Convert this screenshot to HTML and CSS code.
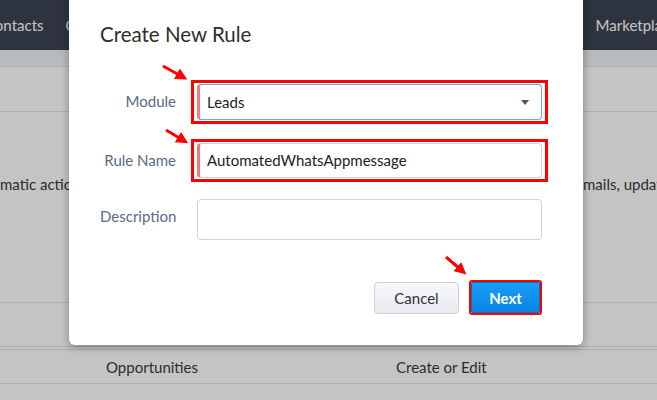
FILE: index.html
```html
<!DOCTYPE html>
<html>
<head>
<meta charset="utf-8">
<link rel="stylesheet" href="styles.css">
</head>
<body>
<div class="page">
  <nav class="topnav">
    <span class="nav-item first">Contacts</span>
    <span class="nav-item">Calls</span>
    <span class="nav-item right">Marketplace</span>
  </nav>
  <div class="subbar"></div>
  <div class="row row-head"></div>
  <div class="row row-desc">
    <span class="desc-left">matic actions are performed when the rule criteria are met</span>
    <span class="desc-right">mails, updating fields and more</span>
  </div>
  <div class="row row-a"></div>
  <div class="row row-b"></div>
  <div class="row row-data">
    <span class="cell">Opportunities</span>
    <span class="cell">Create or Edit</span>
  </div>
  <div class="row row-last"></div>
</div>

<div class="overlay"></div>

<div class="modal">
  <h2 class="modal-title">Create New Rule</h2>
  <div class="form">
    <div class="form-row">
      <label class="form-label">Module</label>
      <div class="field highlighted">
        <div class="select-box">
          <span class="select-value">Leads</span>
          <span class="caret"></span>
        </div>
      </div>
    </div>
    <div class="form-row">
      <label class="form-label">Rule Name</label>
      <div class="field highlighted">
        <div class="text-input">AutomatedWhatsAppmessage</div>
      </div>
    </div>
    <div class="form-row">
      <label class="form-label">Description</label>
      <div class="field">
        <div class="textarea"></div>
      </div>
    </div>
  </div>
  <div class="actions">
    <button class="btn btn-cancel">Cancel</button>
    <button class="btn btn-next">Next</button>
  </div>
</div>

<svg class="annotations" width="657" height="400" viewBox="0 0 657 400">
  <defs>
    <marker id="head" markerWidth="4" markerHeight="4" refX="1.2" refY="2" orient="auto" markerUnits="strokeWidth">
      <path d="M0,0 L4,2 L0,4 Z" fill="#ff0000"/>
    </marker>
  </defs>
  <line x1="163" y1="66" x2="180" y2="75.5" stroke="#ff0000" stroke-width="3" marker-end="url(#head)"/>
  <line x1="166" y1="130" x2="181" y2="139" stroke="#ff0000" stroke-width="3" marker-end="url(#head)"/>
  <line x1="446" y1="257" x2="460" y2="269" stroke="#ff0000" stroke-width="3" marker-end="url(#head)"/>
</svg>
</body>
</html>
```
FILE: styles.css
```css
html, body {
  margin: 0;
  padding: 0;
}
body {
  width: 657px;
  height: 400px;
  overflow: hidden;
  position: relative;
  font-family: Lato, "Open Sans", "Liberation Sans", sans-serif;
  background: #ffffff;
}

.page {
  width: 657px;
  overflow: hidden;
}

.topnav {
  height: 50px;
  background: #3d4452;
  display: flex;
  align-items: center;
  white-space: nowrap;
}
.nav-item {
  color: #ffffff;
  font-size: 15px;
  padding: 0 11px;
  flex-shrink: 0;
  line-height: 50px;
}
.nav-item.first {
  margin-left: -26px;
}
.nav-item.right {
  margin-left: auto;
  margin-right: -31px;
}

.subbar {
  height: 16px;
  background: linear-gradient(#edf0f3, #f4f5f7);
  border-bottom: 1px solid #e3e3e3;
}

.row {
  border-bottom: 1px solid #e3e3e3;
  box-sizing: border-box;
  color: #3a3a3a;
  font-size: 15px;
}
.row-head {
  height: 45px;
}
.row-desc {
  height: 191px;
  display: grid;
  grid-template-columns: 583px 1fr;
  padding-top: 62px;
  white-space: nowrap;
  overflow: hidden;
}
.desc-left, .desc-right {
  overflow: hidden;
  line-height: 20px;
}
.row-a {
  height: 44px;
}
.row-b {
  height: 3px;
}
.row-data {
  height: 34px;
  display: grid;
  grid-template-columns: 290px 1fr;
  padding-left: 106px;
  align-items: center;
}
.row-last {
  height: 20px;
  border-bottom: none;
}

.overlay {
  position: absolute;
  inset: 0;
  background: rgba(0, 0, 0, 0.23);
}

.modal {
  position: absolute;
  left: 69px;
  top: -20px;
  width: 514px;
  box-sizing: border-box;
  padding: 42px 41px 31px 31px;
  background: #ffffff;
  border-radius: 6px;
  box-shadow: 0 2px 9px rgba(0, 0, 0, 0.35);
}

.modal-title {
  margin: 0;
  font-size: 20.5px;
  line-height: 24px;
  font-weight: 400;
  color: #2e2e2e;
}

.form {
  margin-top: 38px;
  display: flex;
  flex-direction: column;
}
.form-row {
  display: flex;
  align-items: flex-start;
  gap: 21px;
}
.form-row + .form-row {
  margin-top: 23px;
}
.form-row:last-child {
  margin-top: 21px;
}
.form-label {
  width: 76px;
  flex-shrink: 0;
  text-align: right;
  font-size: 15px;
  line-height: 20px;
  padding-top: 7px;
  color: #5b6a86;
  white-space: nowrap;
}

.field {
  position: relative;
  width: 345px;
}
.field.highlighted::after {
  content: "";
  position: absolute;
  left: -6px;
  right: -6px;
  top: -4px;
  bottom: -4px;
  border: 3px solid #ff0000;
  box-sizing: border-box;
}

.select-box {
  height: 36px;
  box-sizing: border-box;
  border: 1px solid #63aaf0;
  border-left: 3px solid #f27a7a;
  border-radius: 4px;
  display: flex;
  align-items: center;
  padding-left: 7px;
  padding-right: 12px;
}
.select-value {
  flex: 1;
  font-size: 15px;
  color: #222222;
}
.caret {
  width: 0;
  height: 0;
  border-left: 4px solid transparent;
  border-right: 4px solid transparent;
  border-top: 5px solid #4a5568;
}

.text-input {
  height: 35px;
  box-sizing: border-box;
  border: 1px solid #cfd2d6;
  border-left: 3px solid #e77a7a;
  border-radius: 4px;
  padding-left: 7px;
  font-size: 15px;
  line-height: 33px;
  color: #222222;
}

.textarea {
  height: 41px;
  box-sizing: border-box;
  border: 1px solid #cfd2d6;
  border-radius: 4px;
}

.actions {
  margin-top: 42px;
  display: flex;
  justify-content: flex-end;
  gap: 12px;
}
.btn {
  font-family: Lato, "Open Sans", "Liberation Sans", sans-serif;
  font-size: 15px;
  height: 31px;
  padding: 0;
  cursor: pointer;
}
.btn-cancel {
  width: 85px;
  height: 32px;
  color: #333333;
  background: linear-gradient(#f7f8fa, #e9ebf0);
  border: 1px solid #cdd1d8;
  border-radius: 4px;
}
.btn-next {
  width: 69px;
  margin-right: 2px;
  color: #ffffff;
  font-weight: 700;
  background: linear-gradient(#16a0f8, #0a82e4);
  border: 1px solid #0a6fc4;
  border-radius: 1px;
  outline: 2px solid #ff0000;
  outline-offset: 0;
}

.annotations {
  position: absolute;
  left: 0;
  top: 0;
  pointer-events: none;
}
```
